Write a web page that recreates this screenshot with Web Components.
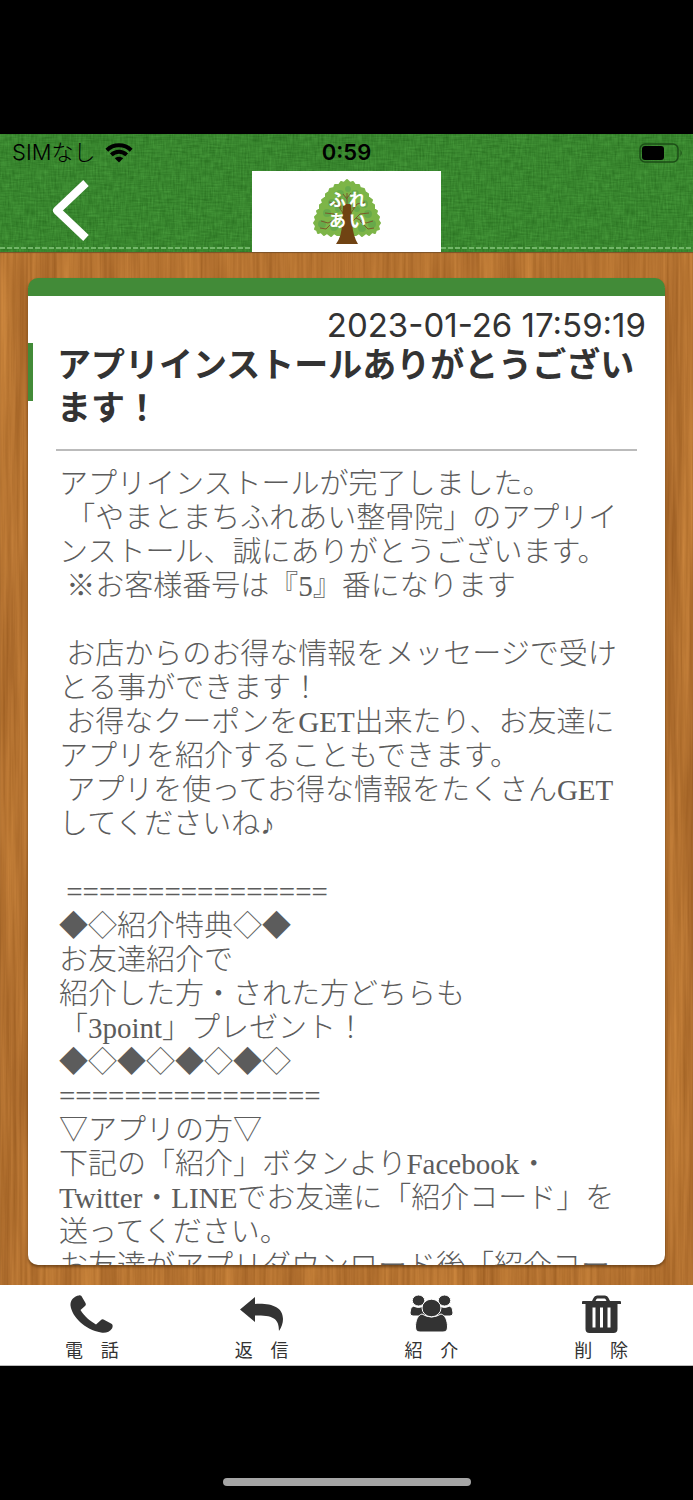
<!DOCTYPE html>
<html lang="ja">
<head>
<meta charset="utf-8">
<meta name="viewport" content="width=device-width, initial-scale=1">
<title>メッセージ</title>
<style>
  body {
    margin: 0;
    background: #000;
    --c-green: #428b38;
    --c-text: #333;
    --c-body: #5c5c5c;
    --f-sans: Inter, "Noto Sans CJK JP", sans-serif;
    --f-serif: "Liberation Serif", "Noto Sans CJK JP", serif;
    color: var(--c-text);
    font-family: var(--f-sans);
  }
</style>
</head>
<body>
<phone-screen>
  <app-header slot="header" carrier="SIMなし" time="0:59"></app-header>
  <message-card>
    <time slot="date" datetime="2023-01-26T17:59:19">2023-01-26 17:59:19</time>
    <span slot="title">アプリインストールありがとうござい<br>ます！</span>
    <message-text>アプリインストールが完了しました。
 「やまとまちふれあい整骨院」のアプリイ
ンストール、誠にありがとうございます。
 ※お客様番号は『5』番になります

 お店からのお得な情報をメッセージで受け
とる事ができます！
 お得なクーポンをGET出来たり、お友達に
アプリを紹介することもできます。
 アプリを使ってお得な情報をたくさんGET
してくださいね♪

 ================
◆◇紹介特典◇◆
お友達紹介で
紹介した方・された方どちらも
「3point」プレゼント！
◆◇◆◇◆◇◆◇
================
▽アプリの方▽
下記の「紹介」ボタンよりFacebook・
Twitter・LINEでお友達に「紹介コード」を
送ってください。
お友達がアプリダウンロード後「紹介コー</message-text>
  </message-card>
  <tool-bar slot="footer">
    <tool-button icon="phone">電　話</tool-button>
    <tool-button icon="reply">返　信</tool-button>
    <tool-button icon="users">紹　介</tool-button>
    <tool-button icon="trash">削　除</tool-button>
  </tool-bar>
</phone-screen>

<script>
const svgUrl = (svg) => `url("data:image/svg+xml,${encodeURIComponent(svg)}")`;

// fine vertical grain over slow, broad bands
const wood = svgUrl(`<svg xmlns="http://www.w3.org/2000/svg" width="693" height="1040">
  <filter id="g" x="0" y="0" width="100%" height="100%" color-interpolation-filters="sRGB">
    <feTurbulence type="fractalNoise" baseFrequency="0.3 0.008" numOctaves="3" seed="8"/>
    <feColorMatrix values="0.28 0 0 0 0.57  0.24 0 0 0 0.33  0.18 0 0 0 0.1  0 0 0 0 1"/>
  </filter>
  <filter id="h" x="0" y="0" width="100%" height="100%" color-interpolation-filters="sRGB">
    <feTurbulence type="fractalNoise" baseFrequency="0.05 0.003" numOctaves="2" seed="4"/>
    <feColorMatrix values="0.4 0 0 0 0.51  0.34 0 0 0 0.28  0.2 0 0 0 0.09  0 0 0 0 0.45"/>
  </filter>
  <rect width="693" height="1040" filter="url(#g)"/>
  <rect width="693" height="1040" filter="url(#h)"/>
</svg>`);

const cloth = svgUrl(`<svg xmlns="http://www.w3.org/2000/svg" width="300" height="120">
  <filter id="a" x="0" y="0" width="100%" height="100%" color-interpolation-filters="sRGB">
    <feTurbulence type="fractalNoise" baseFrequency="0.08 0.6" numOctaves="2" seed="3" stitchTiles="stitch"/>
    <feColorMatrix values="0.18 0 0 0 0.13  0.25 0 0 0 0.4  0.16 0 0 0 0.1  0 0 0 0 1"/>
  </filter>
  <filter id="b" x="0" y="0" width="100%" height="100%" color-interpolation-filters="sRGB">
    <feTurbulence type="fractalNoise" baseFrequency="0.6 0.08" numOctaves="2" seed="5" stitchTiles="stitch"/>
    <feColorMatrix values="0.18 0 0 0 0.13  0.25 0 0 0 0.4  0.16 0 0 0 0.1  0 0 0 0 0.5"/>
  </filter>
  <rect width="300" height="120" filter="url(#a)"/>
  <rect width="300" height="120" filter="url(#b)"/>
</svg>`);

class PhoneScreen extends HTMLElement {
  constructor() {
    super();
    this.attachShadow({ mode: "open" }).innerHTML = `
      <style>
        :host {
          display: flex;
          flex-direction: column;
          height: 100vh;
          box-sizing: border-box;
          padding-top: 134px;
          background: #000;
        }
        main {
          flex: 1;
          min-height: 0;
          display: flex;
          padding: 26px 28px 20px;
          background: #b8763a ${wood} 0 0 / 100% 100%;
          box-shadow: inset 0 1px 1px #7a5128;
        }
        .home {
          height: 134px;
          display: flex;
          justify-content: center;
          align-items: flex-end;
          padding-bottom: 14px;
          box-sizing: border-box;
        }
        .home i {
          width: 248px;
          height: 8px;
          border-radius: 4px;
          background: #a5a5a5;
        }
      </style>
      <slot name="header"></slot>
      <main><slot></slot></main>
      <slot name="footer"></slot>
      <div class="home"><i></i></div>
    `;
  }
}

class AppHeader extends HTMLElement {
  constructor() {
    super();
    this.attachShadow({ mode: "open" });
  }

  connectedCallback() {
    this.shadowRoot.innerHTML = `
      <style>
        :host {
          display: block;
          background: #36822c ${cloth};
        }
        .status, .nav {
          display: grid;
          grid-template-columns: 1fr 189px 1fr;
        }
        .status {
          height: 37px;
          align-items: center;
          color: #000;
          font-size: 22px;
          line-height: 37px;
        }
        .carrier {
          display: flex;
          align-items: center;
          gap: 10px;
          padding-left: 12px;
          font-weight: 300;
        }
        .time {
          text-align: center;
          font-weight: 600;
        }
        .battery {
          justify-self: end;
          padding-right: 10px;
        }
        svg {
          display: block;
        }
        .nav {
          height: 81px;
          background: repeating-linear-gradient(90deg, #72b668 0 5px, transparent 5px 7px) 0 76px / 100% 2px no-repeat;
        }
        button {
          justify-self: start;
          margin: 0;
          padding: 8px 40px 10px 51px;
          border: none;
          background: none;
          cursor: pointer;
        }
        .logo {
          display: flex;
          justify-content: center;
          background: #fff;
        }
        .logo text {
          font-family: "Noto Sans CJK JP", sans-serif;
          font-weight: 700;
          font-size: 17px;
          fill: #fff;
        }
      </style>
      <div class="status">
        <span class="carrier">${this.getAttribute("carrier")}
          <svg width="28" height="20" viewBox="0 0 28 20" fill="none" stroke="#000" stroke-width="4">
            <path d="M1.8 7.2C8.5 0.7 19.5 0.7 26.2 7.2"/>
            <path d="M6.3 11.9C10.7 7.8 17.3 7.8 21.7 11.9"/>
            <path d="M14 19.5L9.8 15.3C12.1 13.3 15.9 13.3 18.2 15.3Z" fill="#000" stroke="none"/>
          </svg>
        </span>
        <span class="time">${this.getAttribute("time")}</span>
        <span class="battery">
          <svg width="44" height="20" viewBox="0 0 44 20">
            <rect x="1" y="1" width="38" height="18" rx="5" fill="none" stroke="#1c4e17" stroke-width="1.5"/>
            <rect x="3" y="3" width="22" height="14" rx="3" fill="#000"/>
            <path d="M41.5 7Q44 10 41.5 13Z" fill="#1c4e17"/>
          </svg>
        </span>
      </div>
      <div class="nav">
        <button type="button" aria-label="戻る">
          <svg width="38" height="63" viewBox="0 0 38 63" fill="none" stroke="#fff" stroke-width="8" stroke-linejoin="round">
            <path d="M35 4L6 31.5L35 59"/>
          </svg>
        </button>
        <div class="logo">
          <svg width="70" height="81" viewBox="0 0 70 81">
            <path fill="#7db548" stroke="#7db548" stroke-width="2" stroke-linejoin="round" d="M35 9L38 12L41 11L43 14L47 14L48 17L52 18L53 21L56 23L56 26L60 29L59 32L62 34L62 38L65 40L64 43L67 46L66 49L68 52L66 55L67 58L64 59L63 62L60 61L57 64L54 62L50 65L47 62L44 64H25L22 62L19 65L15 62L12 64L9 61L6 62L5 59L3 58L4 55L2 52L4 49L3 46L6 43L5 40L8 38L8 34L11 32L10 29L14 26L14 23L17 21L18 18L22 17L23 14L27 14L29 11L32 12Z"/>
            <g fill="#5fa54c" opacity="0.7">
              <circle cx="28" cy="23" r="4"/><circle cx="43" cy="23" r="4"/><circle cx="36" cy="18" r="3"/>
              <circle cx="20" cy="32" r="4"/><circle cx="52" cy="33" r="4"/><circle cx="35" cy="29" r="4"/>
              <circle cx="15" cy="42" r="4"/><circle cx="56" cy="43" r="4"/><circle cx="26" cy="38" r="3"/>
              <circle cx="10" cy="53" r="4"/><circle cx="60" cy="53" r="4"/><circle cx="45" cy="38" r="3"/>
              <circle cx="22" cy="56" r="4"/><circle cx="50" cy="57" r="4"/>
            </g>
            <g fill="none" stroke="#7b5a2a" stroke-width="1">
              <path d="M31 52L22 43L13 42M26 47L16 52L9 50M22 50L14 58L8 57M31 42L25 33L17 31M29 38L28 27M39 52L48 43L57 42M44 47L54 52L61 50M48 50L56 58L62 57M39 42L45 33L53 31M41 38L42 27M35 36V22M35 28L31 23M35 27L39 22"/>
            </g>
            <path fill="#704313" d="M31 33H39L40 52Q41 65 46 73H24Q30 65 30 52Z"/>
            <text x="17" y="35">ふ</text><text x="37" y="35">れ</text>
            <text x="17" y="56">あ</text><text x="37" y="56">い</text>
          </svg>
        </div>
      </div>
    `;
  }
}

class MessageCard extends HTMLElement {
  constructor() {
    super();
    this.attachShadow({ mode: "open" }).innerHTML = `
      <style>
        :host {
          flex: 1;
          min-width: 0;
          display: flex;
          flex-direction: column;
          box-sizing: border-box;
          overflow: hidden;
          border-top: 18px solid var(--c-green);
          border-radius: 10px;
          background: #fff;
          box-shadow: 0 2px 3px rgba(70, 40, 10, 0.6);
        }
        .date {
          padding: 12px 19px 0 0;
          text-align: right;
          font-size: 33px;
          line-height: 35px;
        }
        h1 {
          margin: 0;
          padding: 0 0 0 29px;
          font-size: 34px;
          line-height: 43px;
          font-weight: 700;
          white-space: nowrap;
          background: linear-gradient(var(--c-green), var(--c-green)) 0 0 / 5px 58px no-repeat;
        }
        hr {
          width: calc(100% - 56px);
          margin: 20px auto 16px;
          border: none;
          border-top: 2px solid #bbb;
        }
      </style>
      <div class="date"><slot name="date"></slot></div>
      <h1><slot name="title"></slot></h1>
      <hr>
      <slot></slot>
    `;
  }
}

class MessageText extends HTMLElement {
  constructor() {
    super();
    this.attachShadow({ mode: "open" }).innerHTML = `
      <style>
        :host {
          display: block;
          padding-left: 31px;
          color: var(--c-body);
          font-family: var(--f-serif);
          font-size: 29px;
          font-weight: 300;
          line-height: 34px;
        }
        div {
          white-space: pre;
          text-spacing-trim: space-all;
        }
      </style>
      <div><slot></slot></div>
    `;
  }
}

class ToolBar extends HTMLElement {
  constructor() {
    super();
    this.attachShadow({ mode: "open" }).innerHTML = `
      <style>
        :host {
          display: grid;
          grid-template-columns: repeat(4, 1fr);
          height: 81px;
          box-sizing: border-box;
          padding: 0 7px;
          background: #fff;
          border-bottom: 1px solid #bbb;
        }
      </style>
      <slot></slot>
    `;
  }
}

const icons = {
  phone: `<path d="M9 0.5C10.5 0 11.5 1 12 2L15.500 8C16 9.500 16 10 15 11L10.500 15C14 21 20 26 26 29.500L31 25Q32 24 33.500 24.500L41 28.500C43 29.500 43 31.500 42 33.500C40 37 35 38.500 31 37.500C15 34.500 2 22 0.500 10.500C0 5.500 4 1 9 0.500Z"/>`,
  reply: `<path d="M0 14.500L15 2V9C31 8 43 12 43 24Q43 30 39 36C39 24 34 20 15 20.500V27Z"/>`,
  users: `<g stroke="#fff" stroke-width="1">
      <path d="M3 11Q8.500 14 14 11L17 21H3Q0 21 0 18Q0 13 3 11ZM40 11Q34.500 14 29 11L26 21H40Q43 21 43 18Q43 13 40 11Z"/>
      <ellipse cx="8.500" cy="5.500" rx="6.200" ry="5.500"/><ellipse cx="34.500" cy="5.500" rx="6.200" ry="5.500"/>
      <path d="M12 19Q21.500 25 31 19C35 20 37.500 25 37.500 32Q37.500 37 33 37H10Q5.500 37 5.500 32C5.500 25 8 20 12 19Z"/>
      <ellipse cx="21.500" cy="13" rx="9.500" ry="8.800"/>
    </g>`,
  trash: `<path fill-rule="evenodd" d="M12 6L13.500 3Q14.500 0.500 17 0.500H25Q27.500 0.500 28.500 3L30 6H40Q41 6 41 7V9H37.500V34Q37.500 38 33.500 38H9.500Q5.500 38 5.500 34V9H2V7Q2 6 3 6ZM15.500 6H26.500L25.500 4Q25.200 3.500 24.500 3.500H17.500Q16.800 3.500 16.500 4ZM12.500 12.500V32.500H15.500V12.500ZM20 12.500V32.500H23V12.500ZM27.500 12.500V32.500H30.500V12.500Z"/>`
};

class ToolButton extends HTMLElement {
  constructor() {
    super();
    this.attachShadow({ mode: "open" });
  }

  connectedCallback() {
    this.shadowRoot.innerHTML = `
      <style>
        :host {
          display: block;
        }
        button {
          width: 100%;
          height: 100%;
          display: flex;
          flex-direction: column;
          align-items: center;
          gap: 7px;
          margin: 0;
          padding: 10px 0 0;
          border: none;
          background: none;
          color: inherit;
          font-family: inherit;
          font-size: 18px;
          line-height: 22px;
          cursor: pointer;
        }
      </style>
      <button type="button">
        <svg width="43" height="38" viewBox="0 0 43 38" fill="currentColor">${icons[this.getAttribute("icon")]}</svg>
        <span><slot></slot></span>
      </button>
    `;
  }
}

customElements.define("phone-screen", PhoneScreen);
customElements.define("app-header", AppHeader);
customElements.define("message-card", MessageCard);
customElements.define("message-text", MessageText);
customElements.define("tool-bar", ToolBar);
customElements.define("tool-button", ToolButton);
</script>
</body>
</html>
